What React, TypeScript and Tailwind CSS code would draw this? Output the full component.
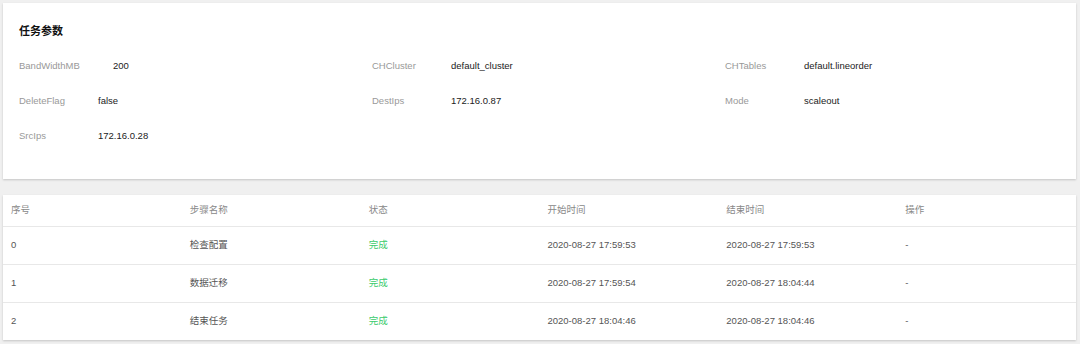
const params = [
  { label: "BandWidthMB", value: "200", wide: true },
  { label: "CHCluster", value: "default_cluster" },
  { label: "CHTables", value: "default.lineorder" },
  { label: "DeleteFlag", value: "false" },
  { label: "DestIps", value: "172.16.0.87" },
  { label: "Mode", value: "scaleout" },
  { label: "SrcIps", value: "172.16.0.28" },
];

const steps = [
  { id: 0, name: "检查配置", start: "2020-08-27 17:59:53", end: "2020-08-27 17:59:53" },
  { id: 1, name: "数据迁移", start: "2020-08-27 17:59:54", end: "2020-08-27 18:04:44" },
  { id: 2, name: "结束任务", start: "2020-08-27 18:04:46", end: "2020-08-27 18:04:46" },
];

const headers = ["序号", "步骤名称", "状态", "开始时间", "结束时间", "操作"];

const App = () => {
  return (
    <div
      className="w-[1080px] h-[344px] bg-[#f0f0f0] pt-[3px] pl-[3px] flex flex-col gap-[16px]"
      style={{ fontFamily: '"Liberation Sans", "Noto Sans CJK SC", sans-serif' }}
    >
      {/* Task params */}
      <div className="w-[1073px] h-[176px] bg-white shadow-[0_1px_2px_rgba(0,0,0,0.18)] pl-4 pt-[20px]">
        <h2 className="text-[11px] leading-[16px] font-bold text-[#111]">任务参数</h2>
        <div className="mt-[10px] grid grid-cols-[353px_353px_1fr]">
          {params.map((p) => (
            <div key={p.label} className="h-[35px] flex items-center text-[9.5px]">
              <span className={`${p.wide ? "w-[94px]" : "w-[79px]"} shrink-0 text-[#999]`}>{p.label}</span>
              <span className="text-[#222]">{p.value}</span>
            </div>
          ))}
        </div>
      </div>

      {/* Steps table */}
      <div className="w-[1073px] bg-white shadow-[0_1px_2px_rgba(0,0,0,0.18)] text-[9.5px]">
        <div className="grid grid-cols-6 h-[32px] items-center border-b border-[#e8e8e8] text-[#888]">
          {headers.map((h) => (
            <div key={h} className="px-2">{h}</div>
          ))}
        </div>
        {steps.map((s, i) => (
          <div
            key={s.id}
            className={`grid grid-cols-6 items-center text-[#555] ${
              i < steps.length - 1 ? "h-[38px] border-b border-[#e8e8e8]" : "h-[37px]"
            }`}
          >
            <div className="px-2">{s.id}</div>
            <div className="px-2">{s.name}</div>
            <div className="px-2 text-[#3ccb6d]">完成</div>
            <div className="px-2">{s.start}</div>
            <div className="px-2">{s.end}</div>
            <div className="px-2">-</div>
          </div>
        ))}
      </div>
    </div>
  );
};

export default App;
